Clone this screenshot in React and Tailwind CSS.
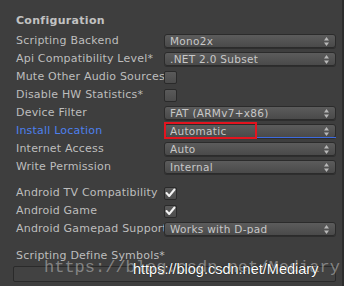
import React from 'react';

const font = { fontFamily: '"DejaVu Sans", Verdana, sans-serif' };

const Arrows = () => (
    <svg width="5" height="9" viewBox="0 0 5 9" className="shrink-0">
        <path d="M2.5 0 L5 3.5 L0 3.5 Z" fill="#b8b8b8" />
        <path d="M0 5.5 L5 5.5 L2.5 9 Z" fill="#b8b8b8" />
    </svg>
);

const Popup = ({ value, active }) => (
    <div className="relative flex h-[14px] w-[172px] items-center justify-between rounded-[3px] border border-[#2b2b2b] bg-gradient-to-b from-[#5c5c5c] to-[#4a4a4a] pl-[5px] pr-[6px] text-[10.5px] leading-none tracking-[0.3px] text-[#c8c8c8] shadow-[0_1px_0_rgba(0,0,0,0.25)]">
        <span className="truncate">{value}</span>
        <Arrows />
        {active && <div className="absolute -bottom-[1px] -left-[1px] -right-[1px] h-[1px] bg-[#3d6be0]" />}
    </div>
);

const Checkbox = ({ checked }) => (
    <div className="flex h-[13px] w-[13px] items-center justify-center rounded-[2px] border border-[#2a2a2a] bg-gradient-to-b from-[#5a5a5a] to-[#4c4c4c]">
        {checked && (
            <svg width="11" height="10" viewBox="0 0 11 10">
                <path d="M1.5 5 L4.2 8 L9.5 1.5" stroke="#f2f2f2" strokeWidth="2" fill="none" strokeLinecap="round" strokeLinejoin="round" />
            </svg>
        )}
    </div>
);

const Row = ({ label, blue, children }) => (
    <div className="flex h-[18px] items-center">
        <div className={`w-[164px] shrink-0 overflow-hidden whitespace-nowrap pl-[16px] text-[11px] tracking-[0.2px] ${blue ? 'text-[#4d80ee]' : 'text-[#bdbdbd]'}`}>
            {label}
        </div>
        {children}
    </div>
);

export default function App() {
    return (
        <div className="relative h-[286px] w-[344px] overflow-hidden border-r-2 border-[#2c2c2c] bg-[#3e3e3e]" style={font}>
            <div className="flex h-[32px] items-center pl-[16px] pt-[10px] text-[11px] font-bold tracking-[0.3px] text-[#c2c2c2]">Configuration</div>

            <Row label="Scripting Backend"><Popup value="Mono2x" /></Row>
            <Row label="Api Compatibility Level*"><Popup value=".NET 2.0 Subset" /></Row>
            <Row label="Mute Other Audio Sources"><Checkbox /></Row>
            <Row label="Disable HW Statistics*"><Checkbox /></Row>
            <Row label="Device Filter"><Popup value="FAT (ARMv7+x86)" /></Row>
            <Row label="Install Location" blue>
                <div className="relative">
                    <Popup value="Automatic" active />
                    <div className="absolute left-0 top-[-2px] h-[17px] w-[93px] border-2 border-[#e3141f]" />
                </div>
            </Row>
            <Row label="Internet Access"><Popup value="Auto" /></Row>
            <Row label="Write Permission"><Popup value="Internal" /></Row>

            <div className="mt-[8px]">
                <Row label="Android TV Compatibility"><Checkbox checked /></Row>
                <Row label="Android Game"><Checkbox checked /></Row>
                <Row label="Android Gamepad Support Level"><Popup value="Works with D-pad" /></Row>
            </div>

            <div className="mt-[11px] pl-[16px] text-[11px] leading-[14px] tracking-[0.2px] text-[#bdbdbd]">Scripting Define Symbols*</div>
            <div className="ml-[13px] mt-[3px] h-[16px] w-[323px] rounded-[2px] border border-[#2a2a2a] bg-[#424242]" />

            {/* watermark */}
            <div className="pointer-events-none absolute left-[44px] top-[255px] whitespace-nowrap text-[17px] text-[rgba(190,190,190,0.55)]" style={{ fontFamily: '"Liberation Mono", monospace' }}>
                https://blog.csdn.net/Mediary
            </div>
            <div className="pointer-events-none absolute left-[133px] top-[259px] whitespace-nowrap text-[14.5px] text-white [text-shadow:0_0_1px_#000]" style={{ fontFamily: '"Liberation Sans", Arial, sans-serif' }}>
                https://blog.csdn.net/Mediary
            </div>
        </div>
    );
}
